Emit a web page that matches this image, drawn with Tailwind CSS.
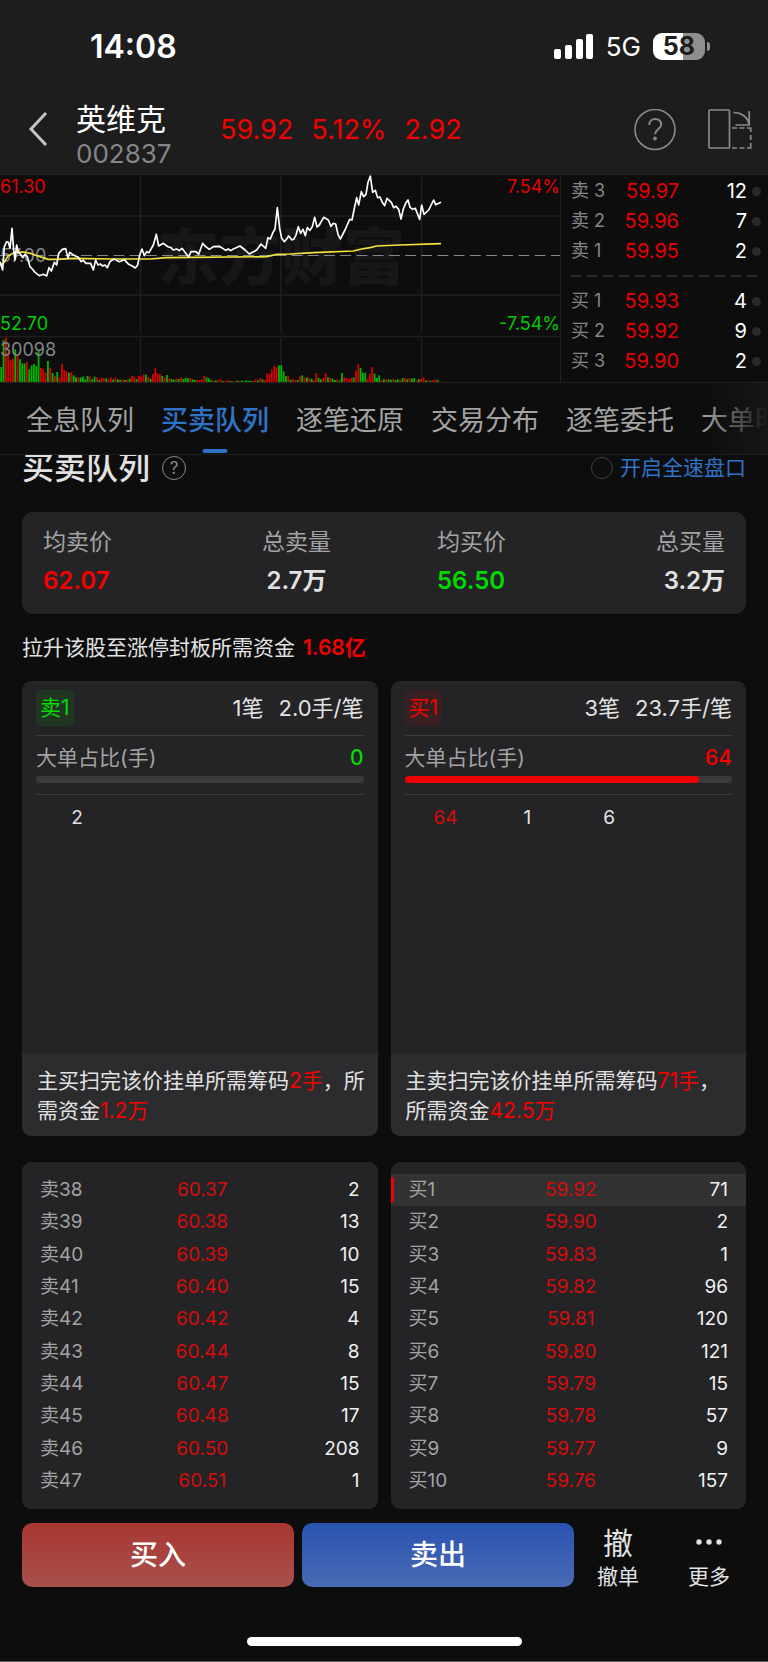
<!DOCTYPE html>
<html lang="zh-CN">
<head>
  <meta charset="UTF-8" />
  <meta name="viewport" content="width=device-width, initial-scale=1.0" />
  <title>英维克 002837</title>
  <script src="https://cdn.jsdelivr.net/npm/@tailwindcss/browser@4"></script>
</head>
<body class="bg-[#0d0d0d] text-[#e2e2e2] font-['Inter','Noto_Sans_CJK_SC',sans-serif] min-h-screen flex flex-col">
  <header class="bg-[#1d1d1d] h-[174px]">
    <!-- status bar -->
    <div class="h-[86px] pt-[7px] pl-[90px] pr-[58px] flex items-center justify-between text-white">
      <span class="text-[32px] leading-8 font-semibold">14:08</span>
      <div class="flex items-center gap-[12px]">
        <svg class="w-[40px] h-[25px]" viewBox="0 0 40 25" fill="#fff">
          <rect x="0" y="15" width="7" height="10" rx="2" />
          <rect x="11" y="11" width="7" height="14" rx="2" />
          <rect x="22" y="5" width="7" height="20" rx="2" />
          <rect x="32" y="0" width="7" height="25" rx="2" />
        </svg>
        <span class="text-[26px] leading-8">5G</span>
        <div class="flex items-center gap-[2px]">
          <div class="w-[52px] h-[27px] rounded-[9px] bg-linear-to-r from-white from-58% to-[#8f8f8f] to-58% text-[#1d1d1d] text-[25px] leading-[27px] font-bold text-center">58</div>
          <div class="w-[3px] h-[9px] rounded-r-full bg-[#8f8f8f]"></div>
        </div>
      </div>
    </div>
    <div class="h-[88px] pl-[26px] pr-[16px] flex items-center">
      <button aria-label="返回" class="w-[24px] mr-[26px]">
        <svg class="w-[24px] h-[36px]" viewBox="0 0 24 36" fill="none" stroke="#c4c4c4" stroke-width="3"><path d="M20 1 5 17l15 16" /></svg>
      </button>
      <div class="w-[144px] pt-[12px]">
        <h1 class="text-[30px] leading-[36px] text-white">英维克</h1>
        <p class="text-[26px] leading-[34px] text-[#85858a]">002837</p>
      </div>
      <div class="flex gap-[18px] text-[27px] leading-8 text-[#f50000] flex-1">
        <span>59.92</span><span>5.12%</span><span>2.92</span>
      </div>
      <button aria-label="帮助" class="mr-[32px]">
        <svg class="w-[42px] h-[42px]" viewBox="0 0 42 42" fill="none" stroke="#8a8a8a" stroke-width="1.6">
          <circle cx="21" cy="20.500" r="20" />
          <path d="M15.2 16c0-8 12-8 12-.6 0 4.600-6.200 5-6.200 9.800" stroke-width="2" />
          <circle cx="21" cy="29.500" r="1.100" fill="#8a8a8a" />
        </svg>
      </button>
      <button aria-label="横屏">
        <svg class="w-[44px] h-[42px]" viewBox="0 0 44 42" fill="none" stroke="#8a8a8a" stroke-width="1.700">
          <rect x="1" y="1" width="20.500" height="38" rx="1" />
          <path d="M24 19h5m2.500 0h5m2.500 0h3.700v4m0 3v5m0 3v5h-3.700m-2.500 0h-5m-2.500 0h-5" />
          <path d="M25.500 3.500C33 3.500 39.500 7.500 41.200 15.500M41.200 2v14H27.500" />
        </svg>
      </button>
    </div>
  </header>

  <section class="flex h-[209px] border-t border-b border-[#212123]">
    <div class="relative flex-1 border-r border-[#212123]">
      <svg class="w-full h-full" viewBox="0 0 560 207">
        <text x="157" y="105" font-size="62" font-weight="900" fill="#171717">东方财富</text>
        <path d="M0 41h560M0 120h560M0 161.500h560M140.500 2v156M281 2v156M421.500 2v156M140.500 163v44M281 163v44M421.500 163v44" stroke="#202022" stroke-width="1.500" />
        <path d="M0 80.500h560" stroke="#85858a" stroke-dasharray="11 5.200" />
        <g id="volume" transform="scale(.33333) translate(0 -30)"></g>
        <text x="0" y="87" font-size="18" fill="#85858a">57.00</text>
        <g transform="scale(.33333) translate(0 -30)" fill="none" stroke-width="5" stroke-linejoin="round">
          <path stroke="#f2e63c" d="M0 300 10 295 25 272 45 262 70 261 95 266 120 275 145 283 170 283 220 280 330 282 450 282 500 278 800 275 830 268 870 267 940 263 1060 258 1085 252 1110 248 1130 243 1200 240 1323 236" />
          <path stroke="#fff" d="M0 290 8 315 13 245 20 230 25 232 30 250 36 190 41 255 45 285 50 240 55 262 62 268 68 278 75 268 82 275 90 305 97 312 105 322 118 332 130 328 140 333 147 308 154 318 163 292 170 300 176 265 187 253 197 251 204 280 209 262 220 270 235 277 243 290 250 286 258 295 272 295 280 315 287 285 294 300 301 297 308 303 315 300 322 308 330 290 342 282 358 290 373 284 386 298 397 303 406 309 413 300 419 270 426 252 433 272 440 260 447 263 460 240 469 208 476 243 490 235 505 246 512 247 520 255 530 252 538 257 546 250 566 276 573 260 588 260 596 268 608 235 615 243 628 253 640 245 658 244 665 248 677 256 685 252 692 257 700 252 720 243 735 255 748 267 770 255 783 237 797 250 804 218 811 222 819 202 825 192 832 128 839 190 845 220 853 230 860 222 866 213 876 225 882 222 888 210 895 185 902 205 909 193 916 212 922 188 930 196 937 185 944 157 951 186 958 180 971 157 985 165 993 184 1000 175 1007 177 1014 208 1021 222 1035 195 1049 163 1056 165 1062 135 1070 98 1076 120 1084 80 1091 95 1098 88 1104 52 1111 33 1118 82 1126 76 1133 98 1140 96 1147 112 1154 122 1161 100 1174 112 1181 128 1188 124 1196 133 1203 162 1210 132 1217 115 1224 105 1230 127 1238 133 1246 130 1259 163 1265 120 1272 148 1286 135 1301 105 1307 119 1323 112" />
        </g>
      </svg>
      <!-- axis labels -->
      <div class="absolute inset-0 flex flex-col justify-between text-[18px] leading-6">
        <div class="h-[161px] flex flex-col justify-between">
          <div class="flex justify-between text-[#e60000]"><span>61.30</span><span>7.54%</span></div>
          <div class="flex justify-between text-[#00cc00]"><span>52.70</span><span>-7.54%</span></div>
        </div>
        <div class="h-[44px] text-[#85858a]">30098</div>
      </div>
    </div>
    <div class="w-[207px] pl-[10px] pr-[7px] text-[20px] leading-[30px]">
      <table class="w-full table-fixed mt-[1px] text-right">
        <tr><td class="w-[34px] text-left text-[18px] text-[#85858a] whitespace-nowrap">卖 3</td><td class="w-[74px] text-[#e60000]">59.97</td><td class="text-white">12</td><td class="w-[14px] pl-[5px]"><div class="size-[9px] rounded-full bg-[#29292b]"></div></td></tr>
        <tr><td class="text-left text-[18px] text-[#85858a] whitespace-nowrap">卖 2</td><td class="text-[#e60000]">59.96</td><td class="text-white">7</td><td class="pl-[5px]"><div class="size-[9px] rounded-full bg-[#29292b]"></div></td></tr>
        <tr><td class="text-left text-[18px] text-[#85858a] whitespace-nowrap">卖 1</td><td class="text-[#e60000]">59.95</td><td class="text-white">2</td><td class="pl-[5px]"><div class="size-[9px] rounded-full bg-[#29292b]"></div></td></tr>
      </table>
      <svg class="w-full h-[2px] my-[9px]"><path d="M0 1h188" stroke="#29292b" stroke-width="2" stroke-dasharray="11 5" /></svg>
      <table class="w-full table-fixed text-right">
        <tr><td class="w-[34px] text-left text-[18px] text-[#85858a] whitespace-nowrap">买 1</td><td class="w-[74px] text-[#e60000]">59.93</td><td class="text-white">4</td><td class="w-[14px] pl-[5px]"><div class="size-[9px] rounded-full bg-[#29292b]"></div></td></tr>
        <tr><td class="text-left text-[18px] text-[#85858a] whitespace-nowrap">买 2</td><td class="text-[#e60000]">59.92</td><td class="text-white">9</td><td class="pl-[5px]"><div class="size-[9px] rounded-full bg-[#29292b]"></div></td></tr>
        <tr><td class="text-left text-[18px] text-[#85858a] whitespace-nowrap">买 3</td><td class="text-[#e60000]">59.90</td><td class="text-white">2</td><td class="pl-[5px]"><div class="size-[9px] rounded-full bg-[#29292b]"></div></td></tr>
      </table>
    </div>
  </section>

  <nav class="relative z-10 h-[72px] bg-[#0d0d0d] border-b border-[#1f1f21] overflow-hidden">
    <div class="h-full pl-[26px] flex gap-[27px] text-[27px] text-[#a3a3a3] whitespace-nowrap">
      <button class="shrink-0 pt-[5px]">全息队列</button>
      <button class="shrink-0 pt-[5px] relative font-medium text-[#2f73c7]">买卖队列<span class="absolute bottom-[1px] left-1/2 -translate-x-1/2 w-[25px] h-[4px] rounded-sm bg-[#2f73c7]"></span></button>
      <button class="shrink-0 pt-[5px]">逐笔还原</button>
      <button class="shrink-0 pt-[5px]">交易分布</button>
      <button class="shrink-0 pt-[5px]">逐笔委托</button>
      <button class="shrink-0 pt-[5px]">大单明细</button>
    </div>
    <div class="absolute inset-y-0 right-0 w-[64px] bg-linear-to-r from-[#161618]/0 to-[#161618]"></div>
  </nav>

  <main class="px-[22px] text-[21px] leading-[30px]">
    <div class="h-[25px] flex items-center">
      <h2 class="text-[32px] leading-6 font-medium">买卖队列</h2>
      <button aria-label="说明" class="ml-[12px] size-[24px] rounded-full border border-[#8a8a8a] text-[17px] leading-[22px] text-[#8a8a8a]">?</button>
      <label class="ml-auto flex items-center gap-[7px] text-[#2f73c7]">
        <input type="checkbox" class="appearance-none size-[22px] rounded-full border border-[#3f3f41]" />开启全速盘口
      </label>
    </div>

    <section class="mt-[32px] h-[102px] px-[21px] pt-[15px] rounded-[11px] bg-[#242426] grid grid-cols-2 gap-[106px]">
      <div class="flex justify-between">
        <div><p class="text-[23px] text-[#a3a3a3]">均卖价</p><p class="mt-[9px] text-[24px] font-semibold text-[#f50000]">62.07</p></div>
        <div class="text-center"><p class="text-[23px] text-[#a3a3a3]">总卖量</p><p class="mt-[9px] text-[24px] font-semibold">2.7万</p></div>
      </div>
      <div class="flex justify-between">
        <div><p class="text-[23px] text-[#a3a3a3]">均买价</p><p class="mt-[9px] text-[24px] font-semibold text-[#00dc00]">56.50</p></div>
        <div class="text-right"><p class="text-[23px] text-[#a3a3a3]">总买量</p><p class="mt-[9px] text-[24px] font-semibold">3.2万</p></div>
      </div>
    </section>

    <p class="mt-[19px]">拉升该股至涨停封板所需资金 <span class="ml-[2px] font-semibold text-[#f50000]">1.68亿</span></p>

    <section class="mt-[18px] grid grid-cols-2 gap-[13px]">
      <div class="h-[455px] rounded-[9px] bg-[#242426] overflow-hidden flex flex-col">
        <div class="px-[14px] flex-1">
          <div class="h-[55px] flex items-center justify-between border-b border-[#3c3c3e] mb-[7px]">
            <span class="px-[4px] py-[3px] rounded-sm bg-[#213523] text-[#00dc00]">卖1</span>
            <span class="flex gap-[15px] text-[22px]"><span>1笔</span><span>2.0手/笔</span></span>
          </div>
          <div class="flex justify-between"><span class="text-[#a3a3a3]">大单占比(手)</span><span class="font-medium text-[#00dc00]">0</span></div>
          <div class="mt-[3px] h-[7px] rounded-full bg-[#3a3a3c]"></div>
          <div class="mt-[11px] border-t border-[#3c3c3e] pt-[8px] grid grid-cols-4 text-center text-[19px]"><span>2</span></div>
        </div>
        <p class="h-[83px] bg-[#2c2c2e] pt-[13px] pl-[15px] pr-[10px]">主买扫完该价挂单所需筹码<span class="text-[#f50000]">2手</span>，所需资金<span class="text-[#f50000]">1.2万</span></p>
      </div>
      <div class="h-[455px] rounded-[9px] bg-[#242426] overflow-hidden flex flex-col">
        <div class="px-[14px] flex-1">
          <div class="h-[55px] flex items-center justify-between border-b border-[#3c3c3e] mb-[7px]">
            <span class="px-[4px] py-[3px] rounded-sm bg-[#382022] text-[#f50000]">买1</span>
            <span class="flex gap-[15px] text-[22px]"><span>3笔</span><span>23.7手/笔</span></span>
          </div>
          <div class="flex justify-between"><span class="text-[#a3a3a3]">大单占比(手)</span><span class="font-medium text-[#f50000]">64</span></div>
          <div class="mt-[3px] h-[7px] rounded-full bg-[#3a3a3c]"><div class="h-full rounded-full bg-[#f00000]" style="width: 90%"></div></div>
          <div class="mt-[11px] border-t border-[#3c3c3e] pt-[8px] grid grid-cols-4 text-center text-[19px]"><span class="text-[#d60c0c]">64</span><span>1</span><span>6</span></div>
        </div>
        <p class="h-[83px] bg-[#2c2c2e] pt-[13px] pl-[15px] pr-[10px]">主卖扫完该价挂单所需筹码<span class="text-[#f50000]">71手</span>，所需资金<span class="text-[#f50000]">42.5万</span></p>
      </div>
    </section>

    <section class="mt-[26px] grid grid-cols-2 gap-[13px] text-[19px] leading-7">
      <div class="rounded-[9px] bg-[#242426] py-[12px]">
        <table class="w-full h-[323px] table-fixed">
          <tbody id="asks"></tbody>
        </table>
      </div>
      <div class="rounded-[9px] bg-[#242426] py-[12px]">
        <table class="w-full h-[323px] table-fixed">
          <tbody id="bids"></tbody>
        </table>
      </div>
    </section>
  </main>

  <footer class="mt-[14px] px-[22px] flex-1 flex flex-col">
    <div class="flex">
      <div class="flex-1 flex gap-[8px] text-[28px] font-medium text-white">
        <button class="flex-1 h-[64px] rounded-[10px] bg-linear-to-b from-[#a83632] to-[#a8504c]">买入</button>
        <button class="flex-1 h-[64px] rounded-[10px] bg-linear-to-b from-[#2853b0] to-[#4a6ab4]">卖出</button>
      </div>
      <div class="w-[172px] pl-[23px] pr-[16px] flex justify-between text-[21px]">
        <button class="flex flex-col items-center"><span class="text-[30px] leading-[40px]">撤</span><span class="leading-[28px]">撤单</span></button>
        <button class="flex flex-col items-center">
          <svg class="w-[28px] h-[40px]" viewBox="0 0 28 40" fill="#e2e2e2"><circle cx="4" cy="19" r="2.700" /><circle cx="14" cy="19" r="2.700" /><circle cx="24" cy="19" r="2.700" /></svg>
          <span class="leading-[28px]">更多</span>
        </button>
      </div>
    </div>
    <div class="mt-auto mb-[15px] mx-auto w-[275px] h-[9px] rounded-full bg-white"></div>
  </footer>
  <div class="h-px bg-[#5a5a5a]"></div>

  <script>
    // volume bars, one per minute: height + direction (r = up, g = down)
    const volume = "45g 126g 133r 86r 65r 70r 98g 82r 68g 56g 56g 60r 38g 50g 54g 48g 97g 42r 38r 28r 63g 42r 27g 18r 30g 14r 55r 36r 32r 28g 30r 20g 14g 14r 14g 16g 8g 18g 17r 8g 16g 14r 6g 13r 11r 11g 8r 14r 8g 14r 8g 6g 8r 6g 7r 10g 18r 16r 9g 18r 17r 23r 22g 15r 10g 24r 41r 26r 24r 18g 14r 21g 11r 9g 7g 11r 9g 14r 9g 13g 11g 12r 8g 6g 6r 6r 8r 18r 14g 11g 5g 4r 5g 6r 8r 3g 3r 6r 3g 2g 2r 4g 3r 4g 2g 5g 3g 3g 3r 7r 5g 12r 8g 6r 25r 25r 38r 48r 44r 50g 50g 32g 18g 17r 7g 9r 6r 6g 17r 20g 14r 14g 12r 10g 6r 27r 12g 8g 12r 26r 14g 12r 10g 6g 8r 4g 27g 14r 12r 8r 12r 14g 34r 53r 42g 28g 28g 10r 25r 45r 25g 12g 20g 6r 8g 8r 8g 7g 10r 6g 8g 7r 12g 12r 8g 11r 10g 12g 6r 8g 10r 14r 5g 5r 4g 5r 7r 6g 2r".split(" ");
    document.getElementById("volume").innerHTML = volume.map((bar, i) => {
      const h = parseInt(bar);
      const color = bar.endsWith("r") ? "#d60000" : "#00b400";
      return `<rect x="${i * 7 + 1}" y="${651 - h}" width="5.500" height="${h}" fill="${color}" />`;
    }).join("");

    const asks = [
      ["卖38", "60.37", 2], ["卖39", "60.38", 13], ["卖40", "60.39", 10], ["卖41", "60.40", 15], ["卖42", "60.42", 4],
      ["卖43", "60.44", 8], ["卖44", "60.47", 15], ["卖45", "60.48", 17], ["卖46", "60.50", 208], ["卖47", "60.51", 1],
    ];
    const bids = [
      ["买1", "59.92", 71], ["买2", "59.90", 2], ["买3", "59.83", 1], ["买4", "59.82", 96], ["买5", "59.81", 120],
      ["买6", "59.80", 121], ["买7", "59.79", 15], ["买8", "59.78", 57], ["买9", "59.77", 9], ["买10", "59.76", 157],
    ];

    function renderRows(id, rows, active) {
      document.getElementById(id).innerHTML = rows.map(([name, price, qty], i) => `
        <tr class="${i === active ? "bg-[#323232]" : ""}">
          <td class="relative p-0 pl-[18px] text-[#a3a3a3]">${i === active ? '<span class="absolute left-0 inset-y-[3px] w-[3px] rounded-r-sm bg-[#f00000]"></span>' : ""}${name}</td>
          <td class="p-0 pl-[5px] text-center text-[#d60c0c]">${price}</td>
          <td class="p-0 pr-[18px] text-right text-[#f0f0f0]">${qty}</td>
        </tr>`).join("");
    }
    renderRows("asks", asks, -1);
    renderRows("bids", bids, 0);
  </script>
</body>
</html>
